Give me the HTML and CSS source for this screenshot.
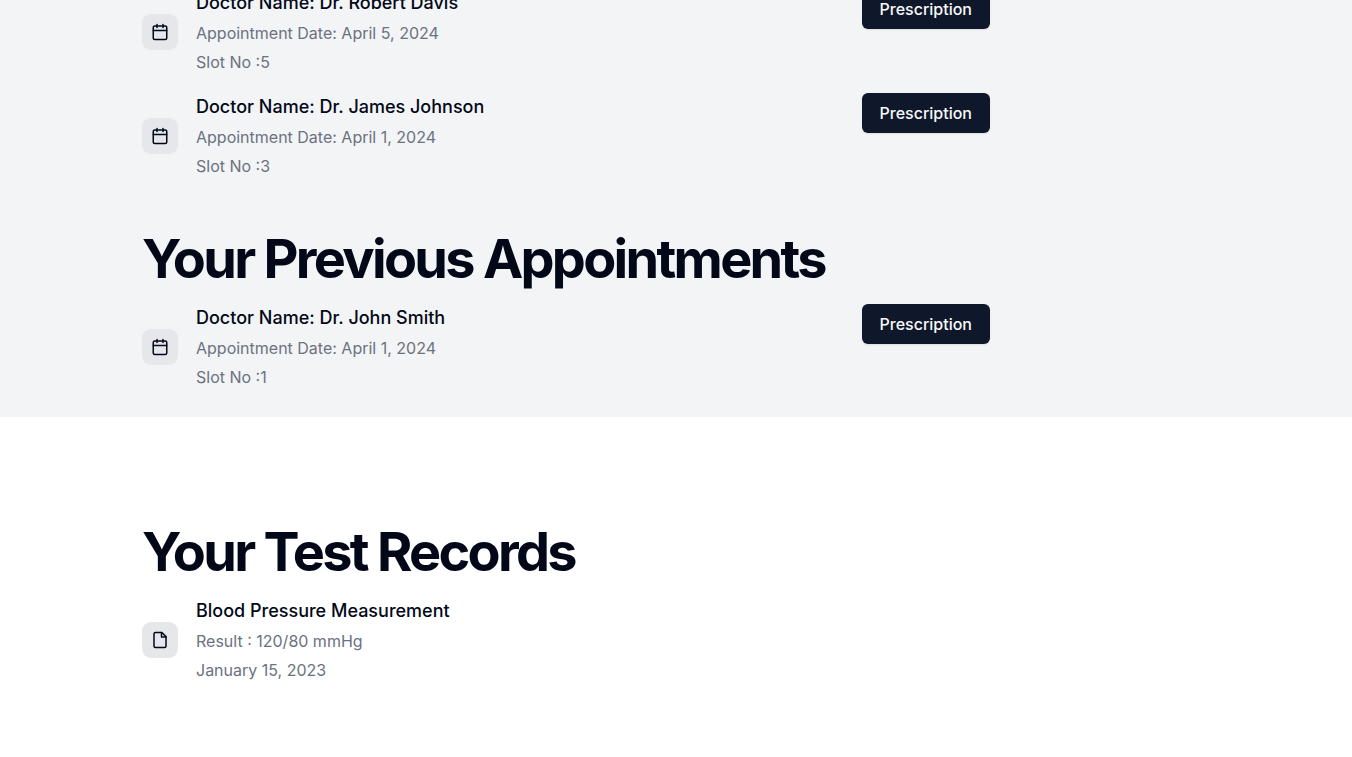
FILE: index.html
```html
<!DOCTYPE html>
<html lang="en">
<head>
<meta charset="utf-8">
<meta name="viewport" content="width=device-width, initial-scale=1">
<title>Appointments</title>
<link rel="stylesheet" href="styles.css">
</head>
<body>
<svg class="sprite" aria-hidden="true">
  <symbol id="calendar" viewBox="0 0 24 24">
    <rect x="3" y="4" width="18" height="18" rx="2"/>
    <path d="M16 2v4M8 2v4M3 10h18"/>
  </symbol>
  <symbol id="file" viewBox="0 0 24 24">
    <path d="M14.5 2H6a2 2 0 0 0-2 2v16a2 2 0 0 0 2 2h12a2 2 0 0 0 2-2V7.5L14.5 2z"/>
    <path d="M14 2v6h6"/>
  </symbol>
</svg>
<main>
  <section class="band band-muted">
    <div class="container">
      <ul class="list list-upcoming">
        <li class="item">
          <span class="badge"><svg class="icon" aria-hidden="true"><use href="#calendar"/></svg></span>
          <div class="details">
            <h3 class="name">Doctor Name: Dr. Robert Davis</h3>
            <p class="meta">Appointment Date: April 5, 2024</p>
            <p class="meta">Slot No :5</p>
          </div>
          <button class="button" type="button">Prescription</button>
        </li>
        <li class="item">
          <span class="badge"><svg class="icon" aria-hidden="true"><use href="#calendar"/></svg></span>
          <div class="details">
            <h3 class="name">Doctor Name: Dr. James Johnson</h3>
            <p class="meta">Appointment Date: April 1, 2024</p>
            <p class="meta">Slot No :3</p>
          </div>
          <button class="button" type="button">Prescription</button>
        </li>
      </ul>
      <h2 class="heading">Your Previous Appointments</h2>
      <ul class="list">
        <li class="item">
          <span class="badge"><svg class="icon" aria-hidden="true"><use href="#calendar"/></svg></span>
          <div class="details">
            <h3 class="name">Doctor Name: Dr. John Smith</h3>
            <p class="meta">Appointment Date: April 1, 2024</p>
            <p class="meta">Slot No :1</p>
          </div>
          <button class="button" type="button">Prescription</button>
        </li>
      </ul>
    </div>
  </section>
  <section class="band band-records">
    <div class="container">
      <h2 class="heading">Your Test Records</h2>
      <ul class="list">
        <li class="item">
          <span class="badge"><svg class="icon" aria-hidden="true"><use href="#file"/></svg></span>
          <div class="details">
            <h3 class="name">Blood Pressure Measurement</h3>
            <p class="meta">Result : 120/80 mmHg</p>
            <p class="meta">January 15, 2023</p>
          </div>
        </li>
      </ul>
    </div>
  </section>
</main>
</body>
</html>
```

FILE: styles.css
```css
* {
  box-sizing: border-box;
  margin: 0;
  padding: 0;
}

body {
  background: #fff;
  color: #020817;
  font-family: Inter, "Liberation Sans", sans-serif;
  font-size: 18px;
  line-height: 27px;
}

.sprite {
  display: none;
}

.band {
  overflow: hidden;
}

.band-muted {
  background: #f3f4f6;
  padding-bottom: 28px;
}

.band-records {
  padding: 108px 0 54px;
}

.container {
  max-width: 1104px;
  margin: 0 auto;
  padding: 0 18px;
}

.heading {
  margin-bottom: 18px;
  font-size: 54px;
  font-weight: 700;
  line-height: 54px;
  letter-spacing: -0.05em;
}

.list {
  display: grid;
  gap: 19px;
  max-width: 848px;
  list-style: none;
}

.list-upcoming {
  margin: -11px 0 54px;
}

.item {
  display: flex;
  align-items: center;
  gap: 18px;
}

.badge {
  display: flex;
  padding: 9px;
  border-radius: 9px;
  background: #e5e7eb;
}

.icon {
  width: 18px;
  height: 18px;
  fill: none;
  stroke: currentColor;
  stroke-width: 2;
  stroke-linecap: round;
  stroke-linejoin: round;
}

.details {
  display: grid;
  flex: 1;
  gap: 6px;
}

.name {
  font-size: 18px;
  font-weight: 500;
}

.meta {
  color: #6b7280;
  font-size: 16px;
  line-height: 23px;
}

.button {
  align-self: flex-start;
  padding: 9px 18px;
  border: 0;
  border-radius: 6px;
  background: #0f172a;
  color: #f8fafc;
  box-shadow: 0 1px 2px rgb(0 0 0 / 10%);
  font: inherit;
  font-size: 16px;
  font-weight: 500;
  line-height: 22px;
}
```
